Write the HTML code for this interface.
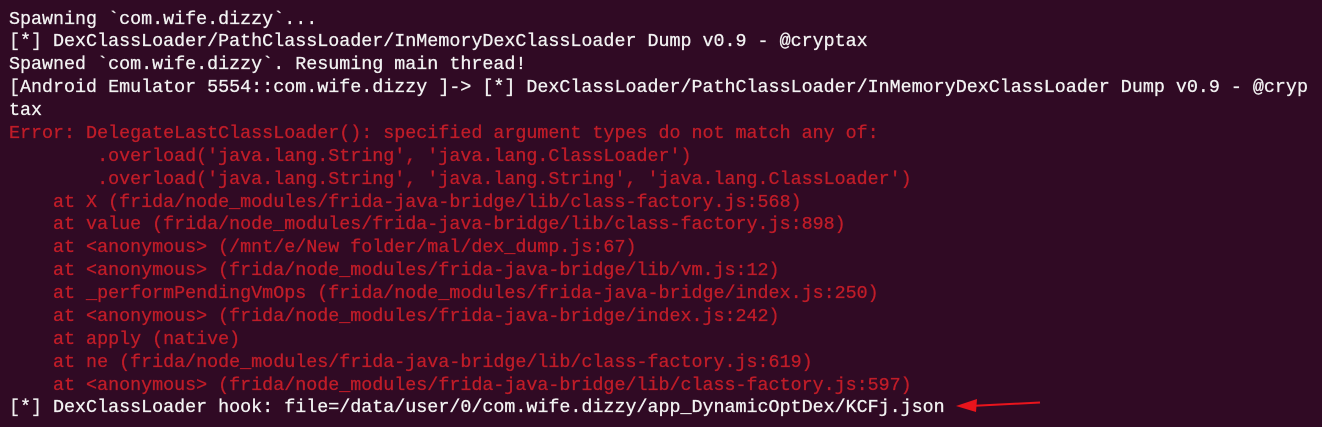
<!DOCTYPE html>
<html><head><meta charset="utf-8"><style>
html,body{margin:0;padding:0;background:#300a24;width:1322px;height:427px;overflow:hidden}
pre{margin:0;position:absolute;left:9px;top:8.5px;font-family:"Liberation Mono",monospace;font-size:18.35px;line-height:22.88px;color:#f2f2f2;white-space:pre;-webkit-text-stroke:0.3px #f2f2f2}
.r{color:#c01c28;-webkit-text-stroke:0.3px #c01c28}
</style></head><body>
<pre>Spawning `com.wife.dizzy`...
[*] DexClassLoader/PathClassLoader/InMemoryDexClassLoader Dump v0.9 - @cryptax
Spawned `com.wife.dizzy`. Resuming main thread!
[Android Emulator 5554::com.wife.dizzy ]-> [*] DexClassLoader/PathClassLoader/InMemoryDexClassLoader Dump v0.9 - @cryp
tax
<span class="r">Error: DelegateLastClassLoader(): specified argument types do not match any of:
        .overload('java.lang.String', 'java.lang.ClassLoader')
        .overload('java.lang.String', 'java.lang.String', 'java.lang.ClassLoader')
    at X (frida/node_modules/frida-java-bridge/lib/class-factory.js:568)
    at value (frida/node_modules/frida-java-bridge/lib/class-factory.js:898)
    at &lt;anonymous&gt; (/mnt/e/New folder/mal/dex_dump.js:67)
    at &lt;anonymous&gt; (frida/node_modules/frida-java-bridge/lib/vm.js:12)
    at _performPendingVmOps (frida/node_modules/frida-java-bridge/index.js:250)
    at &lt;anonymous&gt; (frida/node_modules/frida-java-bridge/index.js:242)
    at apply (native)
    at ne (frida/node_modules/frida-java-bridge/lib/class-factory.js:619)
    at &lt;anonymous&gt; (frida/node_modules/frida-java-bridge/lib/class-factory.js:597)</span>
[*] DexClassLoader hook: file=/data/user/0/com.wife.dizzy/app_DynamicOptDex/KCFj.json</pre>
<svg style="position:absolute;left:0;top:0" width="1322" height="427">
<line x1="1040" y1="402.5" x2="970" y2="406" stroke="#e8141c" stroke-width="2"/>
<polygon points="956,406 977,399 976,412" fill="#e8141c"/>
</svg>
</body></html>
